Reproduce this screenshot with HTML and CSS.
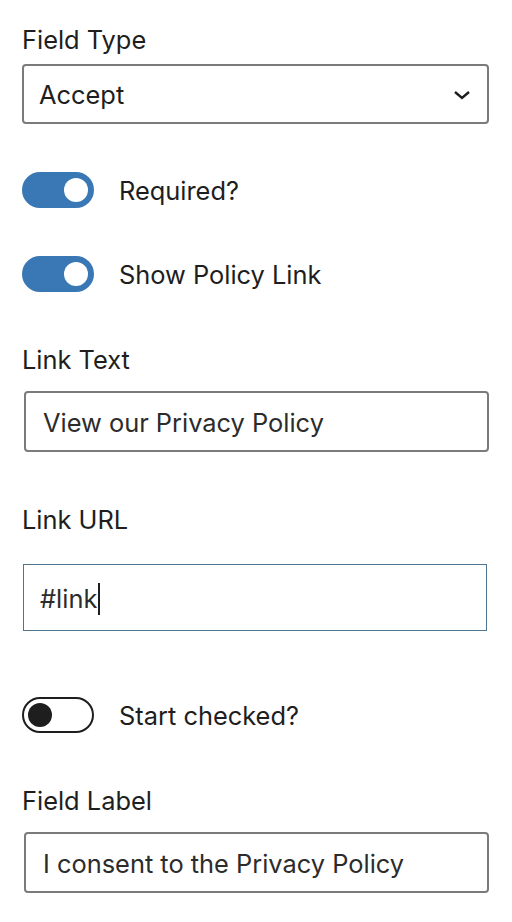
FILE: index.html
```html
<!DOCTYPE html>
<html lang="en">
<head>
    <meta charset="UTF-8">
    <meta name="viewport" content="width=device-width, initial-scale=1.0">
    <title>Field Settings</title>
    <link rel="stylesheet" href="styles.css">
</head>
<body>
    <div id="panel">
        <div class="field-label">Field Type</div>
        <div class="select-box">
            <span>Accept</span>
            <svg class="chevron" width="18" height="10" viewBox="0 0 18 10">
                <path d="M2 2 L9 8 L16 2" fill="none" stroke="#1e1e1e" stroke-width="2.4"/>
            </svg>
        </div>

        <div class="toggle-row first">
            <span class="toggle on"><span class="knob"></span></span>
            <span class="toggle-text">Required?</span>
        </div>
        <div class="toggle-row">
            <span class="toggle on"><span class="knob"></span></span>
            <span class="toggle-text">Show Policy Link</span>
        </div>

        <div class="field-label spaced">Link Text</div>
        <div class="text-box">View our Privacy Policy</div>

        <div class="field-label spaced">Link URL</div>
        <div class="text-box focused">#link<span class="caret"></span></div>

        <div class="toggle-row after-url">
            <span class="toggle"><span class="knob"></span></span>
            <span class="toggle-text">Start checked?</span>
        </div>

        <div class="field-label spaced">Field Label</div>
        <div class="text-box">I consent to the Privacy Policy</div>
    </div>
</body>
</html>
```

FILE: styles.css
```css
body {
    margin: 0;
    background: #ffffff;
    color: #1e1e1e;
    font-family: Inter, "Noto Sans", sans-serif;
    font-size: 25.4px;
    line-height: 36px;
}
#panel {
    padding: 22px 23px 0 22px;
}
.field-label {
    color: #1e1e1e;
}
.field-label.spaced {
    margin-top: 50px;
}
.select-box {
    margin-top: 6px;
    height: 56px;
    border: 2px solid #7b7b7b;
    border-radius: 4px;
    padding: 0 16px 0 15px;
    display: flex;
    align-items: center;
    justify-content: space-between;
    color: #1e1e1e;
}
.select-box span {
    margin-top: 2px;
}
.chevron {
    margin-top: 2px;
}
.toggle-row {
    display: flex;
    align-items: center;
    gap: 25px;
    height: 36px;
    margin-top: 48px;
}
.toggle-row.after-url {
    margin-top: 66px;
}
.toggle-text {
    margin-top: 2px;
}
.toggle {
    width: 72px;
    height: 36px;
    box-sizing: border-box;
    border-radius: 18px;
    border: 2px solid #1e1e1e;
    background: #ffffff;
    display: flex;
    align-items: center;
    padding: 0 4px;
}
.toggle.on {
    background: #3a78b5;
    border-color: #3a78b5;
    justify-content: flex-end;
}
.knob {
    width: 24px;
    height: 24px;
    border-radius: 50%;
    background: #1e1e1e;
}
.toggle.on .knob {
    background: #ffffff;
}
.text-box {
    margin-top: 13px;
    margin-left: 2px;
    height: 55px;
    border: 2px solid #7b7b7b;
    border-radius: 4px;
    padding: 2px 17px 0;
    display: flex;
    align-items: center;
    color: #2c2c2c;
}
.text-box.focused {
    margin-top: 26px;
    margin-left: 1px;
    margin-right: 2px;
    height: 63px;
    border: 1px solid #4f7690;
    border-radius: 0;
    padding: 2px 16px 0;
}
.caret {
    display: inline-block;
    width: 2px;
    height: 32px;
    background: #1e1e1e;
    margin-left: 1px;
}
```
